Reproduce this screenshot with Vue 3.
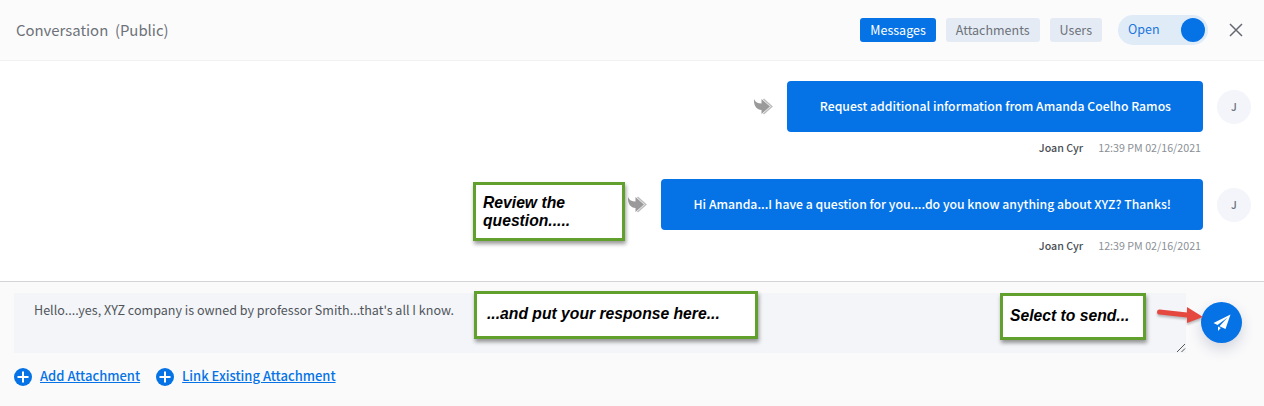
<script setup>
const tabs = [
  { label: 'Messages', active: true },
  { label: 'Attachments', active: false },
  { label: 'Users', active: false },
]
const messages = [
  { text: 'Request additional information from Amanda Coelho Ramos' },
  { text: 'Hi Amanda...I have a question for you....do you know anything about XYZ? Thanks!' },
]
</script>

<template>
  <div class="panel">
    <header class="head">
      <div class="title">Conversation&nbsp; (Public)</div>
      <nav class="tabs">
        <span v-for="t in tabs" :key="t.label" class="tab" :class="{ active: t.active }">{{ t.label }}</span>
      </nav>
      <div class="toggle">
        <span class="toggle-label">Open</span>
        <i class="knob"></i>
      </div>
      <svg class="close" width="14" height="14" viewBox="0 0 14 14" fill="none" stroke="#666a70" stroke-width="1.5">
        <path d="M1 1 L13 13 M13 1 L1 13" />
      </svg>
    </header>

    <main class="list">
      <div v-for="m in messages" :key="m.text" class="msg">
        <div class="row">
          <svg class="fwd" width="20" height="18" viewBox="0 0 20 18">
            <path d="M10.500 1 L18.800 8.500 L10.500 16" fill="none" stroke="#bdbdbd" stroke-width="1.500" />
            <path d="M1 1 C2 4 5 5.500 8.500 5.500 L8.500 1 L17 8.500 L8.500 16 L8.500 12 C4 12 0.500 8 1 1 Z" fill="#9a9a9a" />
          </svg>
          <div class="bubble">{{ m.text }}</div>
          <div class="avatar">J</div>
        </div>
        <div class="meta"><b>Joan Cyr</b><span>12:39 PM 02/16/2021</span></div>
      </div>
    </main>

    <footer class="foot">
      <div class="compose">
        <div class="input">
          Hello....yes, XYZ company is owned by professor Smith...that's all I know.
          <svg class="grip" width="10" height="10" viewBox="0 0 10 10" stroke="#555" stroke-width="1">
            <path d="M1 9 L9 1 M5.500 9 L9 5.500" />
          </svg>
        </div>
        <button class="send" aria-label="Send">
          <svg width="20" height="20" viewBox="0 0 20 20" fill="#fff">
            <path d="M18.500 1.500 L1.500 10 L5.500 12 L15.500 4.500 L7.500 13.200 L13.500 16 Z" />
            <path d="M6 13.500 L6 18 L8.800 15 Z" />
          </svg>
        </button>
      </div>
      <div class="links">
        <a class="link">
          <svg width="18" height="18" viewBox="0 0 18 18"><circle cx="9" cy="9" r="9" fill="#0573e6" /><path d="M9 3.500 V14.500 M3.500 9 H14.500" stroke="#fff" stroke-width="2" /></svg>
          <span>Add Attachment</span>
        </a>
        <a class="link">
          <svg width="18" height="18" viewBox="0 0 18 18"><circle cx="9" cy="9" r="9" fill="#0573e6" /><path d="M9 3.500 V14.500 M3.500 9 H14.500" stroke="#fff" stroke-width="2" /></svg>
          <span>Link Existing Attachment</span>
        </a>
      </div>
    </footer>

    <div class="note n1">Review the question.....</div>
    <div class="note n2">...and put your response here...</div>
    <div class="note n3">Select to send...</div>
    <svg class="arrow" width="50" height="26" viewBox="0 0 50 26">
      <path d="M3.500 7 L31 10" stroke="#e5483f" stroke-width="5" stroke-linecap="round" />
      <path d="M31 2 L47 12 L31 18 Z" fill="#e5483f" />
    </svg>
  </div>
</template>

<style scoped>
.panel {
  position: relative;
  width: 1264px;
  height: 406px;
  overflow: hidden;
  background: #fff;
  font-family: "Noto Sans CJK SC", "Noto Sans", sans-serif;
}
.head {
  height: 60px;
  box-sizing: content-box;
  display: flex;
  align-items: center;
  padding: 0 21px 0 16px;
  background: #fbfbfc;
  border-bottom: 1px solid #f2f2f4;
}
.title {
  flex: 1;
  font-size: 14.900px;
  color: #6d7278;
  line-height: 20px;
}
.tabs {
  display: flex;
  gap: 10px;
}
.tab {
  height: 24px;
  line-height: 24px;
  padding: 0 10px;
  border-radius: 3px;
  background: #e5ebf4;
  color: #6c727a;
  font-size: 12.500px;
}
.tab.active {
  background: #0573e6;
  color: #fff;
}
.toggle {
  display: flex;
  align-items: center;
  justify-content: space-between;
  width: 90px;
  height: 30px;
  margin-left: 16px;
  padding: 0 3px 0 10px;
  box-sizing: border-box;
  border-radius: 15px;
  background: #e0ebf8;
  color: #1c76dc;
  font-size: 12.500px;
}
.toggle-label {
  line-height: 18px;
  padding-bottom: 3px;
}
.knob {
  width: 24px;
  height: 24px;
  border-radius: 50%;
  background: #0573e6;
}
.close {
  margin-left: 21px;
}
.list {
  height: 220px;
  box-sizing: border-box;
  padding-top: 20px;
  padding-right: 13px;
  display: flex;
  flex-direction: column;
  gap: 15px;
}
.msg {
  display: flex;
  flex-direction: column;
  align-items: flex-end;
}
.row {
  display: flex;
  align-items: center;
}
.fwd {
  margin-right: 14px;
}
.bubble {
  height: 51px;
  line-height: 50px;
  padding: 0 32px 0 33px;
  border-radius: 4px;
  background: #0573e6;
  color: #fff;
  font-size: 12.220px;
  font-weight: 500;
  white-space: nowrap;
}
.avatar {
  width: 34px;
  height: 34px;
  margin-left: 14px;
  border-radius: 50%;
  background: #f3f5fa;
  color: #6c727a;
  font-size: 10.500px;
  font-weight: 500;
  line-height: 34px;
  text-align: center;
}
.meta {
  height: 32px;
  line-height: 32px;
  margin-right: 50px;
  font-size: 10.700px;
  color: #8a8f96;
  display: flex;
  gap: 15px;
}
.meta b {
  font-weight: 500;
  color: #4a4f55;
}
.foot {
  height: 125px;
  box-sizing: border-box;
  background: #fafafb;
  border-top: 1px solid #d4d4d8;
  padding: 11px 22px 0 14px;
}
.compose {
  display: flex;
  align-items: flex-start;
  justify-content: space-between;
}
.input {
  position: relative;
  width: 1172px;
  height: 60px;
  box-sizing: border-box;
  padding: 7px 20px;
  background: #f4f5f8;
  color: #50555c;
  font-size: 12.550px;
  line-height: 20px;
}
.grip {
  position: absolute;
  right: 0;
  bottom: 0;
}
.send {
  width: 41px;
  height: 41px;
  margin-top: 9px;
  padding: 0;
  border: none;
  border-radius: 50%;
  background: #0573e6;
  box-shadow: 0 6px 14px rgba(40, 50, 90, 0.18);
  display: flex;
  align-items: center;
  justify-content: center;
}
.links {
  display: flex;
  gap: 16px;
  margin-top: 14px;
}
.link {
  display: flex;
  align-items: center;
  gap: 8px;
  color: #0573e6;
  font-size: 13px;
  font-weight: 500;
}
.link span {
  line-height: 18px;
  padding-bottom: 2px;
  text-decoration: underline;
}
.note {
  position: absolute;
  box-sizing: border-box;
  background: #fff;
  border: 3px solid #62a02e;
  box-shadow: 1px 3px 4px rgba(0, 0, 0, 0.4);
  color: #000;
  font-family: "Liberation Sans", sans-serif;
  font-style: italic;
  font-weight: 700;
  font-size: 15.700px;
  line-height: 18px;
}
.n1 {
  left: 473px;
  top: 182px;
  width: 152px;
  height: 59px;
  padding: 9px 7px;
}
.n2 {
  left: 474px;
  top: 291px;
  width: 284px;
  height: 48px;
  padding: 11px 10px;
}
.n3 {
  left: 1000px;
  top: 293px;
  width: 146px;
  height: 47px;
  padding: 11px 7px;
}
.arrow {
  position: absolute;
  left: 1156px;
  top: 305px;
  filter: drop-shadow(0 2px 1px rgba(0, 0, 0, 0.25));
}
</style>
